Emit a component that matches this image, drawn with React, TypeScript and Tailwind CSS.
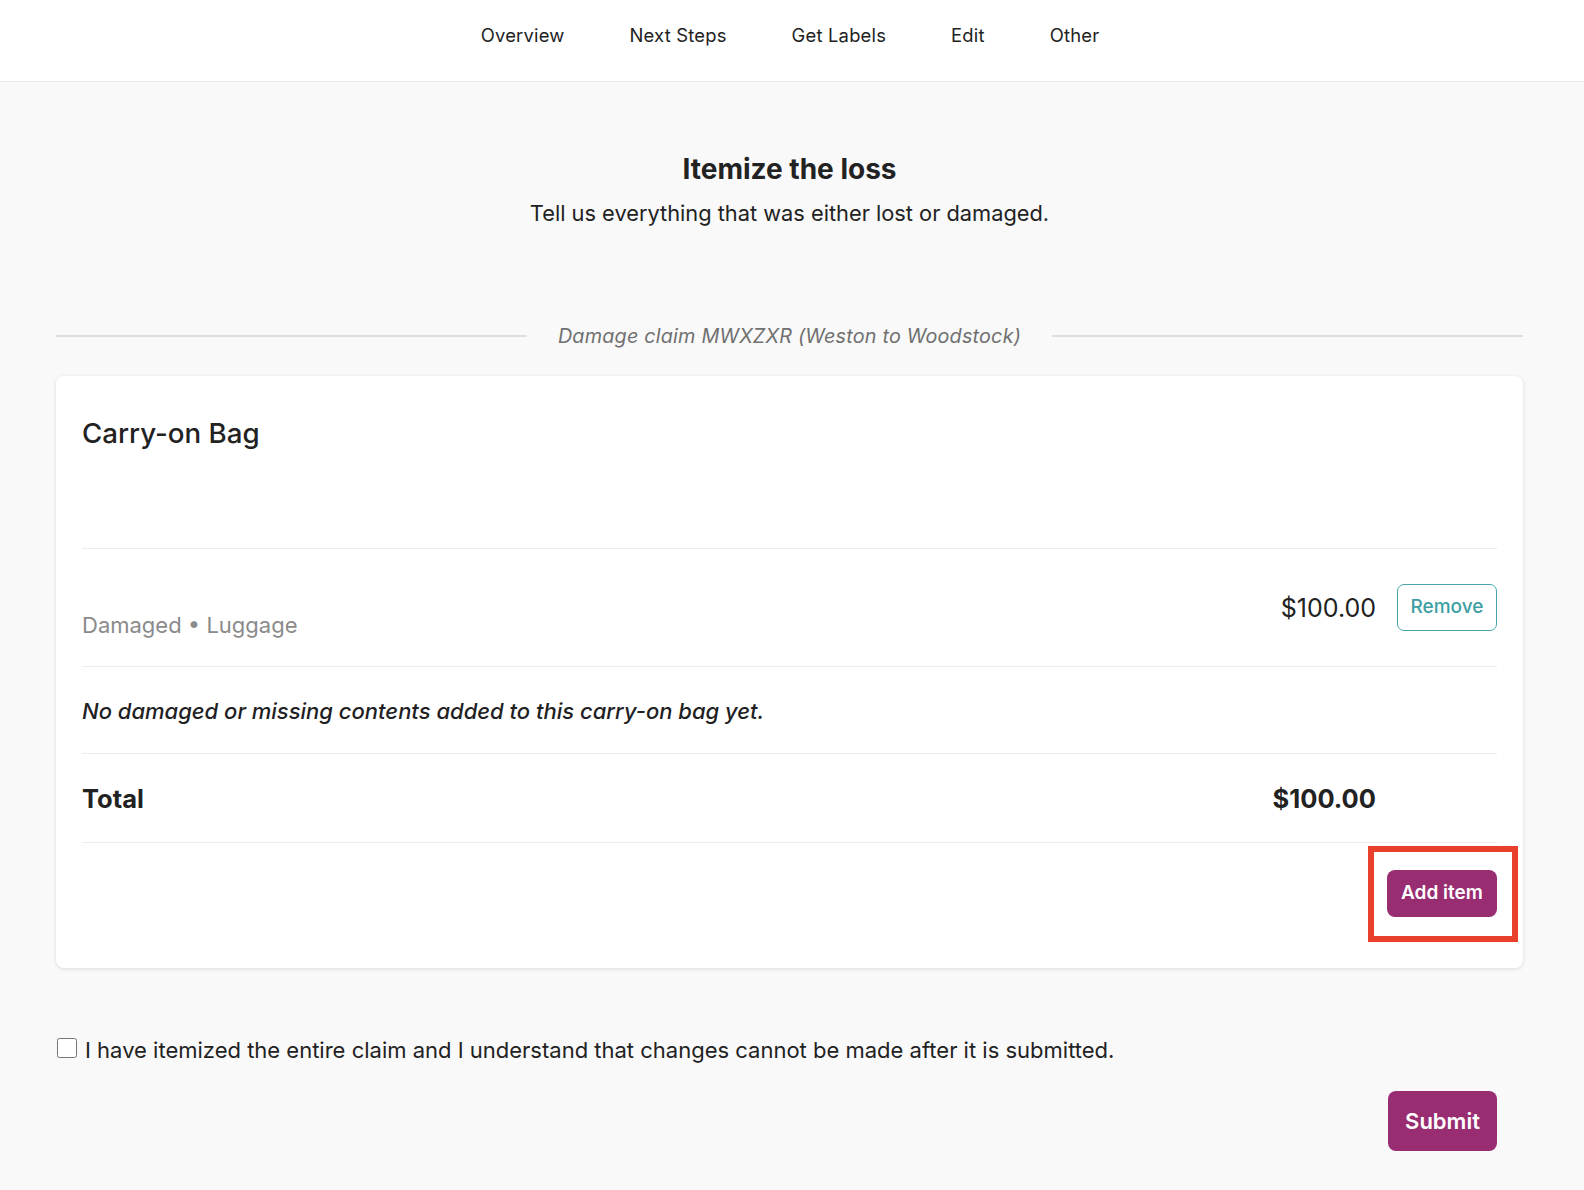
import React from 'react'

const navItems = ['Overview', 'Next Steps', 'Get Labels', 'Edit', 'Other']

export default function App() {
  return (
    <div className="min-h-[1190px] bg-[#f9f9f9] text-[#222] font-['Inter',sans-serif]">
      {/* Top nav */}
      <header className="h-[82px] bg-white border-b border-[#ebebeb] flex items-center justify-center">
        <nav className="flex gap-[65px] pb-[10px] pr-[4px] text-[18.4px] tracking-[0.2px]">
          {navItems.map((item) => (
            <a key={item} href="#" className="text-[#222]">
              {item}
            </a>
          ))}
        </nav>
      </header>

      <main className="pl-[56px] pr-[61px] pt-[68px]">
        {/* Heading */}
        <div className="text-center">
          <h1 className="text-[28px] leading-[38px] font-bold">Itemize the loss</h1>
          <p className="mt-[10px] text-[21.8px] leading-[30px]">Tell us everything that was either lost or damaged.</p>
        </div>

        {/* Divider with label */}
        <div className="mt-[94px] flex items-center gap-[31px]">
          <div className="flex-1 h-[2px] bg-[#dedede]" />
          <span className="italic text-[19.8px] leading-[28px] text-[#707070] tracking-[0.2px]">
            Damage claim MWXZXR (Weston to Woodstock)
          </span>
          <div className="flex-1 h-[2px] bg-[#dedede]" />
        </div>

        {/* Card */}
        <section className="mt-[26px] bg-white rounded-[8px] shadow-[0_1px_4px_rgba(0,0,0,0.12)] px-[26px] pt-[40px]">
          <div className="h-[133px] border-b border-[#ececec]">
            <h2 className="text-[27.7px] leading-[34px] font-medium">Carry-on Bag</h2>
          </div>

          <div className="flex justify-between h-[118px] pt-[35px] pb-[35px] border-b border-[#ececec]">
            <div className="pt-[28px] text-[22px] leading-[26px] text-[#8a8a8a]">Damaged • Luggage</div>
            <div className="flex items-center gap-[21px]">
              <span className="text-[25px] leading-[30px]">$100.00</span>
              <button className="h-[47px] w-[100px] rounded-[7px] border border-[#49a6ab] text-[#3d9ea3] text-[19px] font-medium bg-white">
                Remove
              </button>
            </div>
          </div>

          <div className="pt-[31px] pb-[29px] border-b border-[#ececec]">
            <p className="italic font-medium text-[22px] leading-[26px] text-[#1f1f24]">
              No damaged or missing contents added to this carry-on bag yet.
            </p>
          </div>

          <div className="flex justify-between items-center pt-[30px] pb-[28px] pr-[121px] border-b border-[#ececec]">
            <span className="text-[25.5px] leading-[30px] font-bold">Total</span>
            <span className="text-[25.5px] leading-[30px] font-bold">$100.00</span>
          </div>

          <div className="flex justify-end pt-[27px] pb-[51px]">
            <div className="relative">
              <button className="h-[47px] w-[110px] rounded-[8px] bg-[#982d72] text-white text-[19px] font-semibold">
                Add item
              </button>
              <div className="absolute -left-[19px] -right-[21px] -top-[24px] -bottom-[25px] border-[6px] border-[#e8402a] pointer-events-none" />
            </div>
          </div>
        </section>

        {/* Confirmation */}
        <label className="mt-[67px] flex items-center gap-[8px] text-[22px] leading-[30px]">
          <input type="checkbox" className="w-[20px] h-[20px] mt-[-5px] ml-[1px] accent-[#982d72]" />
          <span>I have itemized the entire claim and I understand that changes cannot be made after it is submitted.</span>
        </label>

        <div className="flex justify-end pr-[26px] mt-[26px]">
          <button className="h-[60px] w-[109px] rounded-[8px] bg-[#982d72] text-white text-[22px] font-semibold">
            Submit
          </button>
        </div>
      </main>
    </div>
  )
}
